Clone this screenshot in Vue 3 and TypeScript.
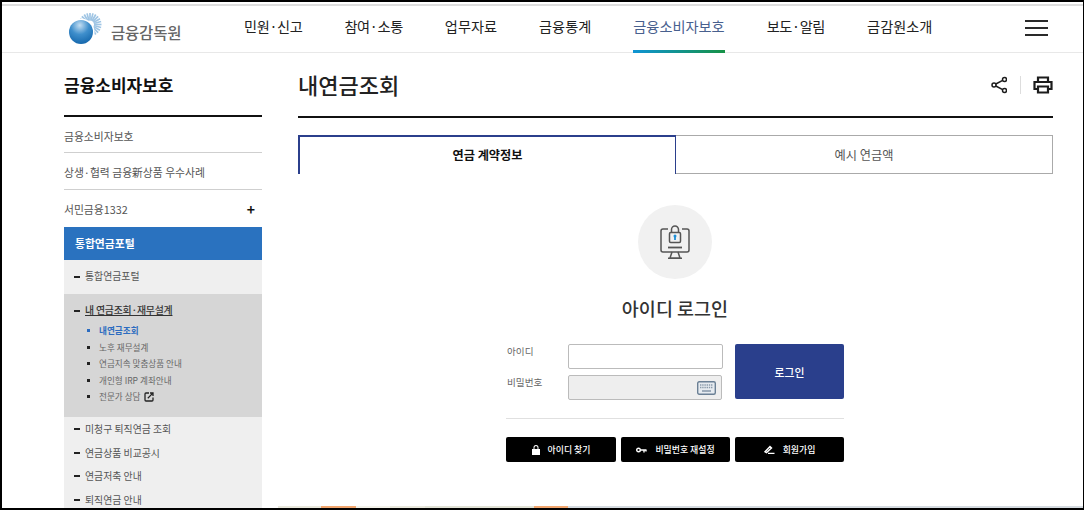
<script setup lang="ts">
const navItems = ["민원·신고", "참여·소통", "업무자료", "금융통계", "금융소비자보호", "보도·알림", "금감원소개"]
const subItems = ["노후 재무설계", "연금지속 맞춤상품 안내", "개인형 IRP 계좌안내"]
const lowerItems = ["미청구 퇴직연금 조회", "연금상품 비교공시", "연금저축 안내", "퇴직연금 안내"]
const rays = Array.from({ length: 24 }, (_, i) => i * 15)
</script>

<template>
  <div class="frame">
    <header class="top">
      <div class="logo">
        <svg width="36" height="36" viewBox="0 0 36 36">
          <defs>
            <radialGradient id="ball" cx="0.45" cy="0.22" r="0.85">
              <stop offset="0" stop-color="#c4def2" />
              <stop offset="0.45" stop-color="#3f8fcc" />
              <stop offset="1" stop-color="#0f62a8" />
            </radialGradient>
          </defs>
          <g stroke="#9fc5e4" stroke-width="1.7">
            <line
              v-for="a in rays"
              :key="a"
              x1="26"
              y1="14.5"
              x2="33.5"
              y2="14.5"
              :transform="`rotate(${a} 22 14.5)`"
            />
          </g>
          <circle cx="13" cy="22" r="13.5" fill="#fff" />
          <circle cx="13" cy="22" r="12" fill="url(#ball)" />
        </svg>
        <span>금융감독원</span>
      </div>
      <nav class="nav">
        <a v-for="(item, i) in navItems" :key="item" :class="{ on: i === 4, dotted: item.includes('·') }">{{ item }}</a>
      </nav>
      <div class="burger"><i></i><i></i><i></i></div>
    </header>

    <div class="body">
      <aside class="side">
        <h2>금융소비자보호</h2>
        <div class="side-link">금융소비자보호</div>
        <div class="side-link">상생·협력 금융新상품 우수사례</div>
        <div class="side-link plain">서민금융1332<b>+</b></div>
        <div class="side-head">통합연금포털</div>
        <div class="side-panel">
          <div class="dash first">통합연금포털</div>
          <div class="open">
            <div class="dash strong">내 연금조회·재무설계</div>
            <ul>
              <li class="cur">내연금조회</li>
              <li v-for="s in subItems" :key="s">{{ s }}</li>
              <li>
                전문가 상담
                <svg width="10" height="10" viewBox="0 0 10 10" fill="none" stroke="#222" stroke-width="1.3">
                  <path d="M5 1H2a1 1 0 0 0-1 1v6a1 1 0 0 0 1 1h6a1 1 0 0 0 1-1V5.5" />
                  <path d="M3.8 6.2 8.6 1.4M6 1H9V4" />
                </svg>
              </li>
            </ul>
          </div>
          <div v-for="l in lowerItems" :key="l" class="dash lower">{{ l }}</div>
        </div>
      </aside>

      <main class="main">
        <div class="title-row">
          <h1>내연금조회</h1>
          <div class="tools">
            <svg width="18" height="18" viewBox="-1.5 0 18 18" fill="none" stroke="#1c1c1c" stroke-width="1.5">
              <circle cx="3.5" cy="9" r="2" />
              <circle cx="14" cy="3.5" r="2" />
              <circle cx="14" cy="14.5" r="2" />
              <path d="M5.3 8 12.2 4.4M5.3 10 12.2 13.6" />
            </svg>
            <span class="sep"></span>
            <svg width="20" height="18" viewBox="0 0 20 18" fill="none" stroke="#1c1c1c" stroke-width="2.2">
              <path d="M5 6V1.5h10V6" />
              <path d="M5 13H1.5V6h17v7H15" />
              <path d="M5 10.5h10v6H5z" />
            </svg>
          </div>
        </div>

        <div class="tabs">
          <div class="tab active">연금 계약정보</div>
          <div class="tab">예시 연금액</div>
        </div>

        <div class="login">
          <div class="badge">
            <svg width="30" height="34" viewBox="0 0 30 34" fill="none" stroke="#555" stroke-width="1.5">
              <path d="M8 4H3a2 2 0 0 0-2 2v19a2 2 0 0 0 2 2h24a2 2 0 0 0 2-2V6a2 2 0 0 0-2-2h-5" />
              <path d="M12 27l-2 6h10l-2-6M8 33.2h14" />
              <path d="M8 22.5h14" stroke-width="1.8" />
              <rect x="9.5" y="7.5" width="11" height="10" rx="1.2" />
              <path d="M11.5 7.5V4.5a3.5 3.5 0 0 1 7 0v3" />
              <path d="M15 11v4" stroke="#1f8fd6" stroke-width="1.8" />
              <circle cx="15" cy="11" r="1.5" fill="#1f8fd6" stroke="none" />
            </svg>
          </div>
          <h3>아이디 로그인</h3>
          <div class="form">
            <div class="fields">
              <div class="field">
                <label>아이디</label>
                <input type="text" />
              </div>
              <div class="field">
                <label>비밀번호</label>
                <div class="pw">
                  <svg width="19" height="14" viewBox="0 0 19 14">
                    <rect x="0.7" y="0.7" width="17.6" height="12.6" rx="1.5" fill="#e6ebf0" stroke="#6b8095" stroke-width="1.4" />
                    <path d="M3 4h13M3 6.5h13" stroke="#8a9aaa" stroke-width="1.4" stroke-dasharray="1.4 .8" />
                    <path d="M5 10h9" stroke="#7d90a3" stroke-width="1.4" />
                  </svg>
                </div>
              </div>
            </div>
            <button class="submit" type="button">로그인</button>
          </div>
          <div class="links">
            <a>
              <svg width="8" height="10" viewBox="0 0 8 10" fill="#fff">
                <path d="M0 4h8v6H0zM1.5 4V2.6a2.5 2.5 0 0 1 5 0V4h-1V2.6a1.5 1.5 0 0 0-3 0V4z" />
              </svg>
              아이디 찾기
            </a>
            <a>
              <svg width="11" height="6" viewBox="0 0 11 6" fill="none" stroke="#fff" stroke-width="1.4">
                <circle cx="2.5" cy="3" r="1.8" />
                <path d="M4.5 3h6M8 3v2.4M10 3v1.6" />
              </svg>
              비밀번호 재설정
            </a>
            <a>
              <svg width="11" height="9" viewBox="0 0 11 9" fill="none" stroke="#fff" stroke-width="1.4">
                <path d="M1 6.8 6 1.6l1.5 1.4-5 4.6zM4 8.4h6.5" />
              </svg>
              회원가입
            </a>
          </div>
        </div>
      </main>
    </div>
    <div class="strip"><i></i><i class="o"></i><i class="l"></i><i></i><i class="m"></i><i class="o"></i><i class="c"></i></div>
  </div>
</template>

<style scoped>
.frame {
  position: relative;
  box-sizing: border-box;
  width: 1084px;
  height: 510px;
  overflow: hidden;
  border: solid #000;
  border-width: 2px 1px 2px 2px;
  background: #fff;
  font-family: "Noto Sans CJK KR", "Noto Sans", sans-serif;
  color: #222;
}
.top {
  position: relative;
  display: flex;
  align-items: center;
  box-sizing: border-box;
  height: 51px;
  padding: 2px 0 0 66px;
  border-bottom: 1px solid #e8e8e8;
}
.top::before {
  content: "";
  position: absolute;
  left: 0;
  right: 0;
  top: 2px;
  height: 2px;
  background: #dedede;
}
.logo {
  display: flex;
  align-items: center;
  width: 176px;
  color: #666;
  font-size: 15.5px;
  font-weight: 500;
}
.logo span {
  margin: 8px 0 0 7px;
  letter-spacing: -0.2px;
}
.nav {
  display: flex;
  gap: 42px;
  height: 49px;
}
.nav a {
  display: flex;
  align-items: center;
  font-size: 14.2px;
  color: #222;
  height: 49px;
  box-sizing: border-box;
  padding-bottom: 1px;
  border-bottom: 3px solid transparent;
}
.nav a.dotted {
  letter-spacing: -0.35px;
}
.nav a.on {
  color: #48608e;
  border-image: linear-gradient(90deg, #0f94d6, #169244) 1;
}
.burger {
  display: flex;
  flex-direction: column;
  gap: 4.5px;
  margin-left: auto;
  margin-right: 35px;
}
.burger i {
  display: block;
  width: 23px;
  height: 2.5px;
  background: #2a2a2a;
}
.body {
  display: flex;
  gap: 36px;
  padding-left: 62px;
}
.side {
  width: 198px;
  flex: none;
}
.side h2 {
  margin: 0;
  height: 64px;
  box-sizing: border-box;
  padding-top: 17px;
  border-bottom: 2px solid #111;
  font-size: 17px;
  line-height: 30px;
  font-weight: 700;
  color: #111;
}
.side-link {
  display: flex;
  align-items: center;
  justify-content: space-between;
  box-sizing: border-box;
  height: 37px;
  padding-top: 1px;
  border-bottom: 1px solid #cfcfcf;
  font-size: 10.8px;
  color: #555;
}
h2 + .side-link {
  height: 36px;
  padding-top: 2px;
}
.side-link.plain {
  border: 0;
}
.side-link b {
  padding-right: 7px;
  color: #111;
  font-size: 14px;
}
.side-head {
  height: 33px;
  line-height: 33px;
  padding-left: 11px;
  background: #2a72bf;
  color: #fff;
  font-size: 10.8px;
  font-weight: 700;
}
.side-panel {
  background: #efefef;
  height: 260px;
}
.dash {
  position: relative;
  padding-left: 21px;
  font-size: 9.9px;
  color: #555;
}
.dash::before {
  content: "";
  position: absolute;
  left: 10px;
  top: 50%;
  width: 6px;
  height: 2px;
  margin-top: -1px;
  background: #222;
}
.first {
  height: 34px;
  line-height: 32px;
}
.open {
  height: 123px;
  background: #d6d6d6;
  box-sizing: border-box;
  padding-top: 8px;
}
.strong {
  height: 17px;
  line-height: 17px;
  color: #333;
  font-weight: 500;
  letter-spacing: -0.2px;
  text-decoration: underline;
}
.open ul {
  margin: 3px 0 0;
  padding: 0;
  list-style: none;
}
.open li {
  position: relative;
  height: 16.6px;
  line-height: 16.6px;
  padding-left: 35px;
  font-size: 8.6px;
  color: #666;
}
.open li::before {
  content: "";
  position: absolute;
  left: 23px;
  top: 7px;
  width: 3px;
  height: 3px;
  background: #222;
}
.open li svg {
  margin-left: 2px;
  vertical-align: -2px;
}
.open li.cur {
  color: #2c6cc0;
  font-weight: 700;
}
.open li.cur::before {
  background: #2c6cc0;
}
.lower {
  height: 23.7px;
  line-height: 24.5px;
}
.main {
  width: 755px;
  flex: none;
}
.title-row {
  display: flex;
  align-items: center;
  justify-content: space-between;
  box-sizing: border-box;
  height: 65px;
  padding-bottom: 1px;
  border-bottom: 2px solid #111;
}
.title-row h1 {
  margin: 0;
  font-size: 22px;
  font-weight: 500;
  color: #222;
}
.tools {
  display: flex;
  align-items: center;
  gap: 12.5px;
  margin-top: 2px;
}
.sep {
  width: 1px;
  height: 18px;
  background: #ddd;
}
.tabs {
  display: flex;
  margin-top: 17px;
  height: 39px;
}
.tab {
  flex: 1;
  box-sizing: border-box;
  border: 1px solid #aaa;
  border-left: 0;
  text-align: center;
  line-height: 38px;
  font-size: 12.2px;
  color: #555;
}
.tab.active {
  flex: none;
  width: 378px;
  border: 2px solid #2b3f8c;
  border-bottom: 0;
  border-right-width: 1px;
  color: #111;
  font-weight: 700;
  line-height: 36px;
}
.login {
  display: flex;
  flex-direction: column;
  align-items: center;
  padding: 31px 1px 0 0;
}
.badge {
  display: flex;
  align-items: center;
  justify-content: center;
  width: 74px;
  height: 74px;
  border-radius: 50%;
  background: #f1f1f1;
}
.login h3 {
  margin: 14px 0 0;
  font-size: 18.5px;
  line-height: 30px;
  font-weight: 500;
  color: #333;
}
.form {
  display: flex;
  justify-content: space-between;
  box-sizing: border-box;
  width: 338px;
  margin-top: 21px;
  padding-bottom: 18px;
  border-bottom: 1px solid #e0e0e0;
}
.fields {
  display: flex;
  flex-direction: column;
  gap: 6px;
}
.field {
  display: flex;
  width: 217px;
  justify-content: space-between;
}
.field label {
  padding-left: 1px;
  font-size: 9.6px;
  line-height: 15px;
  color: #666;
}
.field input,
.pw {
  display: flex;
  align-items: center;
  justify-content: flex-end;
  box-sizing: border-box;
  width: 155px;
  height: 25px;
  margin: 0;
  padding: 0 5px;
  border: 1px solid #bbb;
  border-radius: 2px;
  background: #fff;
}
.pw {
  background: #eee;
  width: 154px;
  margin-right: 1px;
}
.submit {
  width: 109px;
  height: 55px;
  padding: 0;
  border: 0;
  border-radius: 2px;
  background: #2a3f8c;
  color: #fff;
  font-family: inherit;
  font-size: 10.8px;
  font-weight: 500;
}
.links {
  display: flex;
  justify-content: space-between;
  width: 338px;
  margin-top: 18px;
}
.links a {
  display: flex;
  align-items: center;
  justify-content: center;
  gap: 8px;
  width: 109px;
  height: 25px;
  border-radius: 2px;
  background: #000;
  color: #fff;
  font-size: 8.9px;
  font-weight: 500;
}
.links a:first-child {
  width: 110px;
}
.strip {
  position: absolute;
  left: 276px;
  right: 0;
  bottom: 0;
  display: grid;
  grid-template-columns: 43px 35px 34px 35px 109px 34px 1fr;
  height: 2px;
}
.strip i {
  background: #e9e8dd;
}
.strip i.o {
  background: #f2a66e;
}
.strip i.l {
  background: #f3f2ea;
}
.strip i.m {
  background: #e1e2d6;
}
.strip i.c {
  background: #d5dbe0;
}
</style>
